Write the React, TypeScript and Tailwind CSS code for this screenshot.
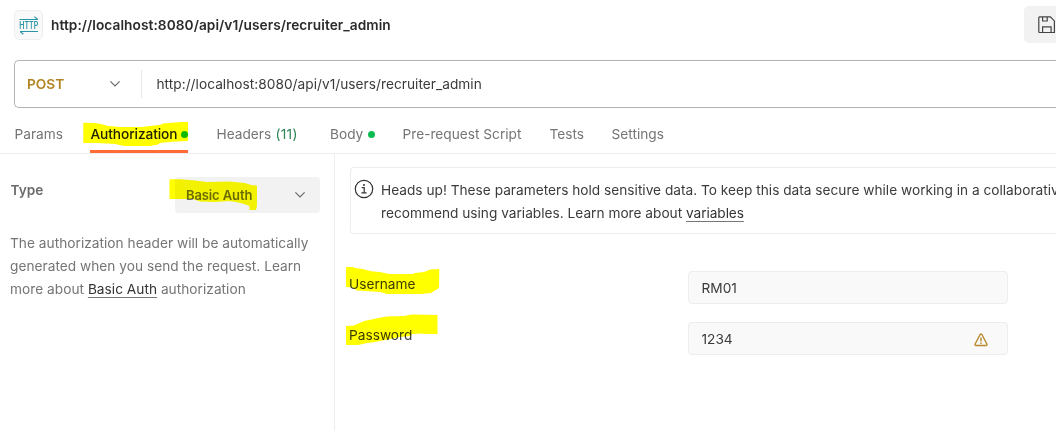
import React from "react";

function Chevron() {
  return (
    <svg width="12" height="8" viewBox="0 0 12 8" fill="none" stroke="#6b6b6b" strokeWidth="1.2">
      <path d="M1.400 1.400 6 6l4.600-4.600" />
    </svg>
  );
}

function HttpIcon() {
  return (
    <svg className="overflow-visible" width="20" height="19" viewBox="0 0 20 19" fill="none" stroke="#2b95a8" strokeWidth="1.2">
      <path d="M.5 3.500H19M15.400.8 18.600 3.400" />
      <path d="M19 15.500H1M1.200 15.600 4.400 18.300" />
      <text x="0.2" y="13" textLength="19" lengthAdjust="spacingAndGlyphs" fontSize="9.800" fontWeight="600" fill="#2b95a8" stroke="none">
        HTTP
      </text>
    </svg>
  );
}

function SaveIcon() {
  return (
    <svg width="18" height="18" viewBox="0 0 18 18" fill="none" stroke="#444" strokeWidth="1.200">
      <path d="M1.500.9h10.900l4 4v11.600H1.500a.7.7 0 0 1-.7-.7V1.600a.7.7 0 0 1 .7-.7Z" />
      <path d="M4.600 1v4h4.600V1M4.600 16.400v-5.500h8.500v5.500" />
    </svg>
  );
}

function InfoIcon() {
  return (
    <svg width="20" height="20" viewBox="0 0 20 20" fill="none" stroke="#333" strokeWidth="1.200">
      <circle cx="10" cy="10" r="8.700" />
      <path d="M7.800 8.600h2.400v5M7.400 13.900h5.200" />
      <circle cx="10" cy="5.900" r="1" fill="#333" stroke="none" />
    </svg>
  );
}

function WarningIcon() {
  return (
    <svg width="14" height="14" viewBox="0 0 14 14" fill="none" stroke="#b7892b" strokeWidth="1.400" strokeLinejoin="round">
      <path d="M6.200 1.200h1.600l5.300 10.300-.6 1H1.500l-.6-1Z" />
      <path d="M7 4.500v4M7 9.500v1.400" />
    </svg>
  );
}

function Marker({ points }: { points: string }) {
  return <polygon points={points} fill="#ffff00" />;
}

function Field({ label, value, warning }: { label: string; value: string; warning?: boolean }) {
  return (
    <div className="flex h-[33px] items-center">
      <div className="w-[339px] shrink-0 pb-[6px]">{label}</div>
      <div className="flex h-[33px] w-[320px] items-center justify-between rounded-[4px] border border-[#ededed] bg-[#f9f9f9] pr-[19px] pl-[12.5px]">
        <span className="pt-px">{value}</span>
        {warning && <span className="pt-[3px]"><WarningIcon /></span>}
      </div>
    </div>
  );
}

export default function App() {
  return (
    <div className="relative isolate flex h-[431px] w-[1056px] flex-col overflow-hidden bg-white font-['Inter',sans-serif] text-[13.7px] leading-[23px] whitespace-nowrap text-[#3b3b3b]">
      <header className="flex h-[60px] shrink-0 items-start justify-between pl-[14px]">
        <div className="flex items-center pt-[10px]">
          <div className="flex h-[30px] w-[29px] items-center justify-center rounded-[5px] border border-[#eeeeee] bg-[#f9f9f9]">
            <HttpIcon />
          </div>
          <h1 className="ml-2 pt-px font-semibold tracking-[0.06px] text-[#2b2b2b]">http://localhost:8080/api/v1/users/recruiter_admin</h1>
        </div>
        <button className="mt-[6px] flex h-[37px] w-[32px] shrink-0 items-center rounded-l-[5px] bg-[#f2f2f2] pl-[14px]">
          <span className="shrink-0"><SaveIcon /></span>
        </button>
      </header>

      <div className="ml-[14px] flex h-[48px] shrink-0 items-center rounded-l-[5px] border border-r-0 border-[#b3b3b3]">
        <div className="flex h-[28px] w-[127px] items-center justify-between border-r border-[#e6e6e6] pr-5 pl-[12px]">
          <span className="pt-px font-semibold text-[#b08422]">POST</span>
          <Chevron />
        </div>
        <span className="pl-[14.5px] tracking-[0.025px]">http://localhost:8080/api/v1/users/recruiter_admin</span>
      </div>

      <nav className="flex h-[46px] shrink-0 items-end gap-7 border-b border-[#ededed] pl-[14.5px] text-[#757575]">
        <span className="h-[38px] pt-[8px]">Params</span>
        <span className="-ml-[0.500px] flex h-[38px] w-[98px] items-start justify-between border-b-[3px] border-[#ff6c37] pt-[8px] font-medium tracking-[-0.09px] text-[#212121]">
          Authorization
          <i className="mt-[8px] size-[7px] rounded-full bg-[#0cbb52]" />
        </span>
        <span className="h-[38px] w-[82px] pt-[8px]">
          Headers <span className="ml-[0.5px] tracking-[0.25px] text-[#2b8552]">(11)</span>
        </span>
        <span className="ml-[3.500px] flex h-[38px] w-[45.500px] justify-between pt-[8px]">
          Body
          <i className="mt-[8px] size-[7px] rounded-full bg-[#0cbb52]" />
        </span>
        <span className="-ml-[1px] h-[38px] pt-[8px]">Pre-request Script</span>
        <span className="h-[38px] pt-[8px]">Tests</span>
        <span className="-ml-[0.500px] h-[38px] pt-[8px]">Settings</span>
      </nav>

      <main className="flex min-h-0 flex-1">
        <aside className="w-[335px] shrink-0 border-r border-[#ededed] pt-[23px] pl-[10px] text-[#757575]">
          <div className="flex h-[36px] justify-between pr-[14px]">
            <span className="pt-[2px] pl-[0.500px] font-semibold text-[#6b6b6b]">Type</span>
            <div className="flex h-[36px] w-[145px] items-center justify-between rounded-[4px] bg-[#f2f2f2] pr-[14px] pl-[11px] text-[13px] font-semibold tracking-[-0.12px] text-[#6b6b6b]">
              Basic Auth
              <Chevron />
            </div>
          </div>
          <p className="mt-[19px] tracking-[0.02px]">
            The authorization header will be automatically
            <br />
            generated when you send the request. Learn
            <br />
            more about <a className="text-[#333333] underline decoration-[#777777] decoration-1 underline-offset-[3px]">Basic Auth</a> authorization
          </p>
        </aside>
        <section className="min-w-0 flex-1 pt-[13px] pl-[14px]">
          <div className="ml-px flex h-[67px] rounded-l-[4px] border border-r-0 border-[#ededed] pt-[11px] pl-[3px]">
            <span className="shrink-0"><InfoIcon /></span>
            <p className="min-w-0 flex-1 pl-[7px]">
              Heads up! These parameters hold sensitive data. To keep this data secure while working in a collaborative
              <br />
              recommend using variables. Learn more about{" "}
              <a className="tracking-[-0.08px] text-[#333333] underline decoration-[#777777] decoration-1 underline-offset-[3px]">variables</a>
            </p>
          </div>
          <div className="flex flex-col gap-[18px] pt-[37px]">
            <Field label="Username" value="RM01" />
            <Field label="Password" value="1234" warning />
          </div>
        </section>
      </main>

      <svg className="pointer-events-none absolute inset-0 mix-blend-multiply" width="1056" height="431" viewBox="0 0 1056 431">
        <Marker points="83.300,122.700 95,123 101,124 108,126 120,127 141,127 150,126 160,125 163,123.500 175,122.500 182,122 188,122 188,141 176,141.500 170,142 160,143 158,144.500 150,146 124,146 115,144 107,143.500 97,143 83.300,143" />
        <Marker points="169.500,179.300 181,179.300 195,180.500 207,182 230,181.500 245,183 251,185 257,185.500 257,206 256,210 249.500,210 249.500,206 244,204 236,202 229,201 215,202 200,201.500 193,199 169.500,199" />
        <Marker points="346,267 353,267 355,268 363,269 366,270 373,271.500 380,272 389,274 413,274 415,273 424,272 430,269.500 439.300,269 439,288 434,291 431,293 421,294 387,294 380,292 365,291 357,290.500 353,287.500 346,287" />
        <Marker points="346,326 354,325.500 364,321 381,317.500 387,316.500 404,316 412,314.500 437.500,315 437.500,334 423,334 422,333.500 412,334 411,336 400,337 385,340 372,342.500 367,343 358,345 346,345" />
      </svg>
    </div>
  );
}
